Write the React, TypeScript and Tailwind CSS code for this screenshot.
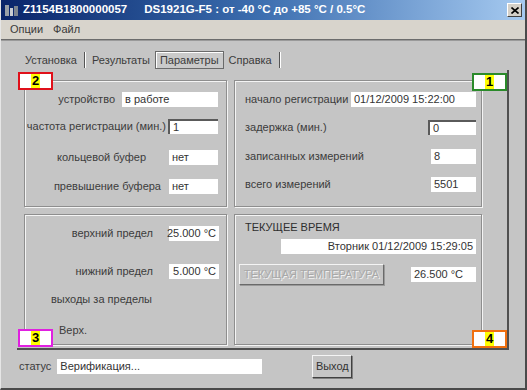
import React from "react";

const box = "border border-[#8e8e8e] shadow-[inset_1px_1px_0_#f4f4f4,1px_1px_0_#f4f4f4]";
const label = "text-[11px] text-[#3c3c3c] whitespace-nowrap leading-none";

interface FieldProps {
  value: string;
  width: string;
  sunken?: boolean;
  right?: boolean;
}

function Field({ value, width, sunken, right }: FieldProps) {
  return (
    <div
      className={`${width} h-[15px] bg-white flex items-center px-[3px] text-[11px] text-[#333] leading-none whitespace-nowrap ${
        sunken ? "border-t-2 border-l-2 border-[#5a5a5a]" : ""
      } ${right ? "justify-end" : ""}`}
    >
      {value}
    </div>
  );
}

function Badge({ n, color, pos }: { n: string; color: string; pos: string }) {
  return (
    <div className={`absolute ${pos} w-[35px] h-[18px] bg-white border-2 ${color} flex items-center justify-center`}>
      <span className="bg-[#ffff00] px-[1px] text-[13px] font-bold text-black leading-[14px]">{n}</span>
    </div>
  );
}

function Tab({ text, active }: { text: string; active?: boolean }) {
  return (
    <div
      className={`h-[18px] flex items-center px-[4px] text-[11px] text-[#3c3c3c] ${
        active ? "border border-[#6a6a6a] shadow-[inset_1px_1px_0_#fff] bg-[#cacaca]" : ""
      }`}
    >
      {text}
    </div>
  );
}

function TabSep() {
  return <div className="w-[1px] h-[16px] bg-[#555] shadow-[1px_0_0_#fff] mx-[3px]" />;
}

export default function App() {
  return (
    <div className="w-[527px] h-[390px] bg-[#c5c5c5] flex flex-col overflow-hidden font-['Liberation_Sans',Arial,sans-serif] border-l border-[#e6e6e6] border-r-2 border-r-[#4a4a4a] border-b-2 border-b-[#4a4a4a]">
      {/* title bar */}
      <div className="h-[20px] flex items-center bg-linear-to-r from-[#0a246a] via-[#3d6fb0] to-[#a6caf0] pl-[3px] pr-[3px]">
        <svg width="16" height="14" viewBox="0 0 16 14">
          <rect x="1" y="2" width="4" height="11" fill="#9aa0a8" />
          <rect x="6" y="5" width="3" height="8" fill="#c8ccd2" />
          <rect x="10" y="3" width="4" height="10" fill="#7d8590" />
        </svg>
        <span className="ml-[3px] text-[11.5px] font-bold text-white whitespace-nowrap">Z1154B1800000057</span>
        <span className="ml-[17px] text-[11.5px] font-bold text-white whitespace-nowrap">
          DS1921G-F5 : от -40 °C до +85 °C / 0.5°C
        </span>
        <div className="ml-auto w-[15px] h-[14px] bg-[#d4d0c8] border border-t-white border-l-white border-r-[#404040] border-b-[#404040] flex items-center justify-center">
          <svg width="8" height="7" viewBox="0 0 8 7">
            <path d="M0.5 0.5 L7.5 6.5 M7.5 0.5 L0.5 6.5" stroke="#000" strokeWidth="1.6" />
          </svg>
        </div>
      </div>

      {/* menu */}
      <div className="h-[19px] bg-[#d8d4cc] flex items-center gap-[10px] pl-[9px] text-[11px] text-[#3a3a3a]">
        <span>Опции</span>
        <span>Файл</span>
      </div>
      <div className="h-[2px] bg-[#6c6c6c] border-b border-[#9a9a9a]" />

      {/* tabs */}
      <div className="mt-[10px] ml-[20px] flex items-center h-[18px]">
        <Tab text="Установка" />
        <TabSep />
        <Tab text="Результаты" />
        <div className="w-[1px]" />
        <Tab text="Параметры" active />
        <div className="w-[1px]" />
        <Tab text="Справка" />
        <TabSep />
      </div>

      {/* panel */}
      <div className="relative ml-[16px] mt-[1px] w-[492px] h-[280px] border-r-2 border-b-2 border-[#505050] pl-[7px] pt-[10px]">
        <div className="grid grid-cols-[203px_248px] grid-rows-[127px_131px] gap-x-[7px] gap-y-[7px]">
          {/* top-left */}
          <div className={`${box} flex flex-col pt-[11px] pr-[8px]`}>
            <div className="flex items-center justify-end h-[15px]">
              <span className={`${label} mr-[7px]`}>устройство</span>
              <Field value="в работе" width="w-[96px]" />
            </div>
            <div className="flex items-center justify-end h-[16px] mt-[11px]">
              <span className={`${label} mr-[2px]`}>частота регистрации (мин.)</span>
              <Field value="1" width="w-[50px]" sunken />
            </div>
            <div className="flex items-center justify-end h-[15px] mt-[16px]">
              <span className={`${label} mr-[23px]`}>кольцевой буфер</span>
              <Field value="нет" width="w-[49px]" />
            </div>
            <div className="flex items-center justify-end h-[15px] mt-[14px]">
              <span className={`${label} mr-[8px]`}>превышение буфера</span>
              <Field value="нет" width="w-[49px]" />
            </div>
          </div>

          {/* top-right */}
          <div className={`${box} flex flex-col pt-[11px] pl-[10px] pr-[5px]`}>
            <div className="flex items-center justify-between h-[15px]">
              <span className={label}>начало регистрации</span>
              <Field value="01/12/2009 15:22:00" width="w-[125px]" />
            </div>
            <div className="flex items-center justify-between h-[16px] mt-[12px]">
              <span className={label}>задержка (мин.)</span>
              <Field value="0" width="w-[48px]" sunken />
            </div>
            <div className="flex items-center justify-between h-[15px] mt-[14px]">
              <span className={label}>записанных измерений</span>
              <Field value="8" width="w-[45px]" />
            </div>
            <div className="flex items-center justify-between h-[15px] mt-[13px]">
              <span className={label}>всего измерений</span>
              <Field value="5501" width="w-[45px]" />
            </div>
          </div>

          {/* bottom-left */}
          <div className={`${box} flex flex-col pt-[11px] pr-[7px]`}>
            <div className="flex items-center justify-end h-[15px]">
              <span className={`${label} mr-[16px]`}>верхний предел</span>
              <Field value="25.000 °C" width="w-[50px]" right />
            </div>
            <div className="flex items-center justify-end h-[16px] mt-[22px]">
              <span className={`${label} mr-[16px]`}>нижний предел</span>
              <Field value="5.000 °C" width="w-[50px]" right />
            </div>
            <div className="flex justify-end pr-[67px] mt-[15px]">
              <span className={label}>выходы за пределы</span>
            </div>
            <div className="pl-[34px] mt-[12px]">
              <span className={label}>Верх.</span>
            </div>
          </div>

          {/* bottom-right */}
          <div className={`${box} flex flex-col pt-[7px] pl-[4px] pr-[5px]`}>
            <span className="ml-[6px] text-[11px] text-[#2e2e2e] leading-none">ТЕКУЩЕЕ ВРЕМЯ</span>
            <div className="flex justify-end mt-[6px]">
              <Field value="Вторник 01/12/2009 15:29:05" width="w-[195px]" right />
            </div>
            <div className="flex items-center justify-between mt-[10px]">
              <div className="w-[145px] h-[21px] flex items-center justify-center border border-t-[#f4f4f4] border-l-[#f4f4f4] border-r-[#6a6a6a] border-b-[#6a6a6a] shadow-[1px_1px_0_#9a9a9a] text-[11px] text-[#a8a8a8] [text-shadow:1px_1px_0_#f0f0f0] whitespace-nowrap">
                ТЕКУЩАЯ ТЕМПЕРАТУРА
              </div>
              <Field value="26.500 °C" width="w-[65px]" />
            </div>
          </div>
        </div>

        <Badge n="2" color="border-[#e0101a]" pos="left-[1px] top-[2px]" />
        <Badge n="1" color="border-[#2a8a2a]" pos="right-0 top-[3px]" />
        <Badge n="3" color="border-[#e020e0]" pos="left-[1px] bottom-[1px]" />
        <Badge n="4" color="border-[#f07010]" pos="right-0 bottom-0" />
      </div>

      {/* status row */}
      <div className="flex items-center pl-[18px] mt-[4px] h-[24px]">
        <span className={label}>статус</span>
        <div className="ml-[6px]">
          <Field value="Верификация..." width="w-[205px]" />
        </div>
        <div className="ml-[50px] w-[40px] h-[23px] flex items-center justify-center border border-t-[#f4f4f4] border-l-[#f4f4f4] border-r-[#404040] border-b-[#404040] shadow-[1px_1px_0_#808080] text-[11px] text-[#333]">
          Выход
        </div>
      </div>
    </div>
  );
}
